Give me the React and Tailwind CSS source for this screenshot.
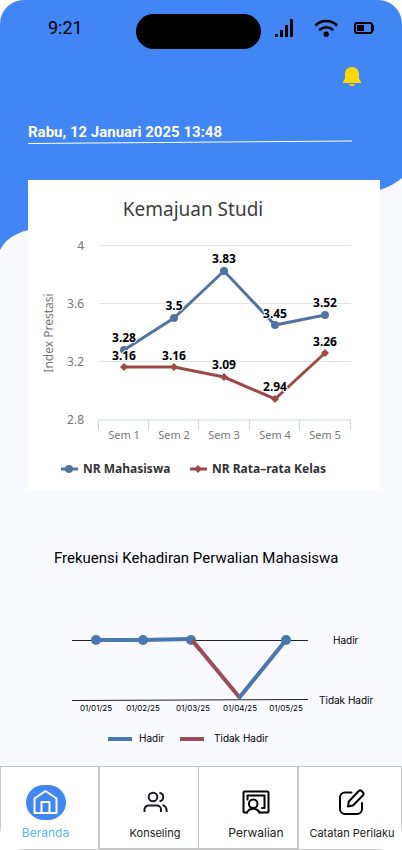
const studentIndex = [
  { x: 96, y: 170, label: "3.28", labelY: 162 },
  { x: 146, y: 138, label: "3.5", labelY: 130 },
  { x: 196, y: 91, label: "3.83", labelY: 83 },
  { x: 247, y: 145, label: "3.45", labelY: 138 },
  { x: 297, y: 135, label: "3.52", labelY: 127 },
];

const classIndex = [
  { x: 96, y: 187, label: "3.16", labelY: 180 },
  { x: 146, y: 187, label: "3.16", labelY: 180 },
  { x: 196, y: 197, label: "3.09", labelY: 189 },
  { x: 247, y: 219, label: "2.94", labelY: 211 },
  { x: 297, y: 173, label: "3.26", labelY: 166 },
];

const gridRows = [
  { y: 66, label: "4" },
  { y: 124, label: "3.6" },
  { y: 182, label: "3.2" },
  { y: 240, label: "2.8" },
];

const ticks = [71, 121, 171, 222, 272, 323];

const meetings = [
  { x: 96, label: "01/01/25" },
  { x: 143, label: "01/02/25" },
  { x: 193, label: "01/03/25" },
  { x: 240, label: "01/04/25" },
  { x: 286, label: "01/05/25" },
];

const toPoints = (series) => series.map((p) => `${p.x},${p.y}`).join(" ");

function Diamond({ x, y }) {
  return <path d={`M${x} ${y - 4}L${x + 4} ${y}L${x} ${y + 4}L${x - 4} ${y}Z`} className="fill-[#9c4a47]" />;
}

function ValueLabels({ series }) {
  return (
    <g
      className="fill-black stroke-white stroke-2 text-[12px] font-bold"
      textAnchor="middle"
      paintOrder="stroke"
      strokeLinejoin="round"
    >
      {series.map((p) => (
        <text key={p.x} x={p.x} y={p.labelY}>
          {p.label}
        </text>
      ))}
    </g>
  );
}

function StatusBar() {
  return (
    <div className="flex h-[35px] items-center pl-12 pr-7">
      <time className="w-[88px] pb-2 text-[18px] leading-[20px] text-black">9:21</time>
      <div className="h-[35px] w-[125px] rounded-full bg-black" />
      <svg className="mb-[7px] ml-auto h-[18px] w-[99px]" viewBox="0 0 99 18" aria-hidden="true">
        <path d="M0 15h3v3H0zM5 11h3v7H5zM10 6h3v12h-3zM15 0h3v18h-3z" />
        <g fill="none" stroke="#000" strokeLinecap="round" strokeWidth="2.5">
          <path d="M41 6c5.500-5.200 15-5.200 20.500 0" />
          <path d="M45 10.500c3.700-3 9-3 12.500 0" />
        </g>
        <circle cx="51.200" cy="15.200" r="2.600" />
        <rect x="80" y="4" width="17" height="10" rx="2" fill="none" stroke="#000" strokeWidth="2" />
        <rect x="82" y="6" width="7" height="6" />
        <rect x="97" y="6" width="2" height="6" rx="1" />
      </svg>
    </div>
  );
}

function StudyProgress() {
  return (
    <section className="ml-7 mr-[22px] mt-[36px] bg-white">
      <svg
        viewBox="0 0 352 310"
        className="block w-full font-['Noto_Sans','Open_Sans',sans-serif]"
        role="img"
        aria-label="Kemajuan Studi"
      >
        <text x="165" y="36" textAnchor="middle" className="fill-[#3e3e3e] text-[19px]">
          Kemajuan Studi
        </text>

        {gridRows.slice(0, 3).map((row) => (
          <path key={row.label} d={`M71 ${row.y - 0.5}H323`} stroke="#e3e3e5" />
        ))}
        <path d="M71 240H323" stroke="#ccd6eb" />
        {ticks.map((x) => (
          <path key={x} d={`M${x - 0.5} 240v10`} stroke="#ccd6eb" />
        ))}

        <g className="fill-[#777777] text-[12px]">
          {gridRows.map((row) => (
            <text key={row.label} x="56" y={row.y + 4} textAnchor="end">
              {row.label}
            </text>
          ))}
          {studentIndex.map((p, i) => (
            <text key={p.x} x={p.x} y="259" textAnchor="middle" className="text-[11px]">
              Sem {i + 1}
            </text>
          ))}
          <text transform="translate(25 153) rotate(-90)" textAnchor="middle">
            Index Prestasi
          </text>
        </g>

        <g className="stroke-[#5272a3]" fill="none" strokeWidth="3">
          <polyline points={toPoints(studentIndex)} />
          <path d="M33 289H50" />
        </g>
        <g className="fill-[#5272a3]">
          {studentIndex.map((p) => (
            <circle key={p.x} cx={p.x} cy={p.y} r="4" />
          ))}
          <circle cx="41" cy="289" r="4" />
        </g>

        <g className="stroke-[#9c4a47]" fill="none" strokeWidth="3">
          <polyline points={toPoints(classIndex)} />
          <path d="M162 289H179" />
        </g>
        {classIndex.map((p) => (
          <Diamond key={p.x} x={p.x} y={p.y} />
        ))}
        <Diamond x={170} y={289} />

        <ValueLabels series={studentIndex} />
        <ValueLabels series={classIndex} />

        <g className="fill-[#333333] text-[12px] font-bold">
          <text x="55" y="293">NR Mahasiswa</text>
          <text x="184" y="293">NR Rata–rata Kelas</text>
        </g>
      </svg>
    </section>
  );
}

function Attendance() {
  return (
    <section className="mt-[58px]">
      <h2 className="pl-[54px] text-[15px] leading-[20px] text-black">Frekuensi Kehadiran Perwalian Mahasiswa</h2>
      <svg
        viewBox="0 0 402 138"
        className="mt-[52px] block w-full font-[Inter,sans-serif]"
        role="img"
        aria-label="Frekuensi Kehadiran Perwalian Mahasiswa"
      >
        <path d="M72 20.500H308M72 80.500L308 79.500" stroke="#222" />
        <g fill="none" strokeWidth="4">
          <path d="M192 20L240 78" stroke="#9c4c55" />
          <path d="M96 20H143L190 19M239 78L286 20" stroke="#4a77ad" />
          <path d="M108 119H132" stroke="#4a77ad" />
          <path d="M180 119H204" stroke="#9c4c55" />
        </g>
        {[96, 143, 191, 286].map((x) => (
          <circle key={x} cx={x} cy="20" r="5" fill="#4a77ad" />
        ))}
        <path d="M192 20L200 30" stroke="#9c4c55" strokeWidth="4" />
        <g className="text-[8px]" textAnchor="middle">
          {meetings.map((m) => (
            <text key={m.x} x={m.x} y="91">
              {m.label}
            </text>
          ))}
        </g>
        <g className="text-[10px]">
          <text x="333" y="24">Hadir</text>
          <text x="319" y="84">Tidak Hadir</text>
          <text x="139" y="122">Hadir</text>
          <text x="214" y="122">Tidak Hadir</text>
        </g>
      </svg>
    </section>
  );
}

function HomeIcon() {
  return (
    <svg className="h-[35px] w-[40px]" viewBox="0 0 40 35" aria-hidden="true">
      <rect width="40" height="35" rx="18" fill="#4285f4" />
      <g fill="none" stroke="#fff" strokeWidth="2" strokeLinejoin="round">
        <path d="M8.500 28V13.500L19.500 6l11 7.500V28z" />
        <path d="M15.500 28V17h8v11" />
      </g>
    </svg>
  );
}

function PeopleIcon() {
  return (
    <svg
      className="h-[23px] w-[25px]"
      viewBox="0 0 25 23"
      fill="none"
      stroke="#1b1b28"
      strokeWidth="2"
      aria-hidden="true"
    >
      <circle cx="10" cy="6" r="4.300" />
      <path d="M16.500 1.700c5 .9 5 7.700 0 8.600" />
      <path d="M1.500 21v-2.500a4 4 0 0 1 4-4h8.500a4 4 0 0 1 4 4V21" />
      <path d="M19.500 14c3 .6 4.200 2.500 4.200 7" />
    </svg>
  );
}

function TeacherBoardIcon() {
  return (
    <svg
      className="h-[26px] w-[29px]"
      viewBox="0 0 29 26"
      fill="none"
      stroke="#000"
      strokeWidth="2"
      strokeLinecap="round"
      strokeLinejoin="round"
      aria-hidden="true"
    >
      <path d="M5 23.500H2.500a1 1 0 0 1-1-1v-19a1 1 0 0 1 1-1h23a1 1 0 0 1 1 1v19a1 1 0 0 1-1 1H17.500" />
      <path d="M5.500 10.500v-4h17v12.500h-2.500" />
      <circle cx="11.200" cy="14.800" r="4.300" />
      <path d="M5 23.500a7 7 0 0 1 12.500 0" />
    </svg>
  );
}

function EditIcon() {
  return (
    <svg
      className="h-[28px] w-[28px]"
      viewBox="0 0 28 28"
      fill="none"
      stroke="#000"
      strokeWidth="2"
      strokeLinecap="round"
      strokeLinejoin="round"
      aria-hidden="true"
    >
      <path d="M13.500 4.500H7a5 5 0 0 0-5 5V21a5 5 0 0 0 5 5h12a5 5 0 0 0 5-5v-6" />
      <path d="M10 18.500l.8-5L21 2.800a1.600 1.600 0 0 1 2.200 0l2 2a1.600 1.600 0 0 1 0 2.200L15 17.500z" />
    </svg>
  );
}

function NavItem({ label, icon, className, active }) {
  return (
    <a
      href="#"
      aria-current={active ? "page" : undefined}
      className={`flex h-full flex-col items-center border-[#c8c8c8] pt-[17px] leading-[14px] ${
        active ? "text-[#5ab4f5]" : "text-[#222222]"
      } ${className}`}
    >
      <span className="flex h-[36px] items-center">{icon}</span>
      <span className="mt-[6px] whitespace-nowrap">{label}</span>
    </a>
  );
}

export default function App() {
  return (
    <div className="relative flex min-h-screen flex-col overflow-hidden rounded-[24px] bg-[#f9faff] font-[Roboto,sans-serif]">
      <svg
        className="absolute left-0 top-0 h-[250px] w-full"
        viewBox="0 0 402 250"
        preserveAspectRatio="none"
        aria-hidden="true"
      >
        <path d="M0 0H402V178C396 183 389 187 380 190L28 230C14 234 5 240 0 250Z" fill="#4285f4" />
      </svg>

      <header className="relative pt-[14px]">
        <StatusBar />
        <div className="flex justify-end pr-[41px] pt-[17px]">
          <button type="button" aria-label="Notifikasi" className="block">
            <svg className="block h-[20px] w-[18px]" viewBox="0 0 18 20" fill="#ffd600" aria-hidden="true">
              <path d="M9 1C4.500 1 2 4 2 8v4.500L0 16v1h18v-1l-2-3.500V8c0-4-2.500-7-7-7z" />
              <path d="M6 18h6c-.6 1.300-1.700 2-3 2s-2.400-.7-3-2z" />
            </svg>
          </button>
        </div>
        <div className="ml-7 mr-[50px] mt-[36px]">
          <p className="text-[15px] font-bold leading-[20px] text-white">Rabu, 12 Januari 2025 13:48</p>
          <svg className="mt-[-2px] block h-[4px] w-full" viewBox="0 0 324 4" preserveAspectRatio="none" aria-hidden="true">
            <path d="M0 3.500L324 1" stroke="#fff" />
          </svg>
        </div>
      </header>

      <main className="relative flex-1">
        <StudyProgress />
        <Attendance />
      </main>

      <nav className="relative grid h-[84px] grid-cols-[98fr_100fr_99fr_105fr] bg-white font-[Inter,sans-serif]">
        <NavItem active label="Beranda" icon={<HomeIcon />} className="border-y border-l pr-2 text-[12px]" />
        <NavItem
          label="Konseling"
          icon={<PeopleIcon />}
          className="border-b-2 border-l-2 border-t pl-3 text-[11px]"
        />
        <NavItem
          label="Perwalian"
          icon={<TeacherBoardIcon />}
          className="border-b-2 border-l border-t pl-4 text-[12px]"
        />
        <NavItem
          label="Catatan Perilaku"
          icon={<EditIcon />}
          className="border-y border-l-2 border-r pl-1 text-[11px]"
        />
      </nav>
    </div>
  );
}
